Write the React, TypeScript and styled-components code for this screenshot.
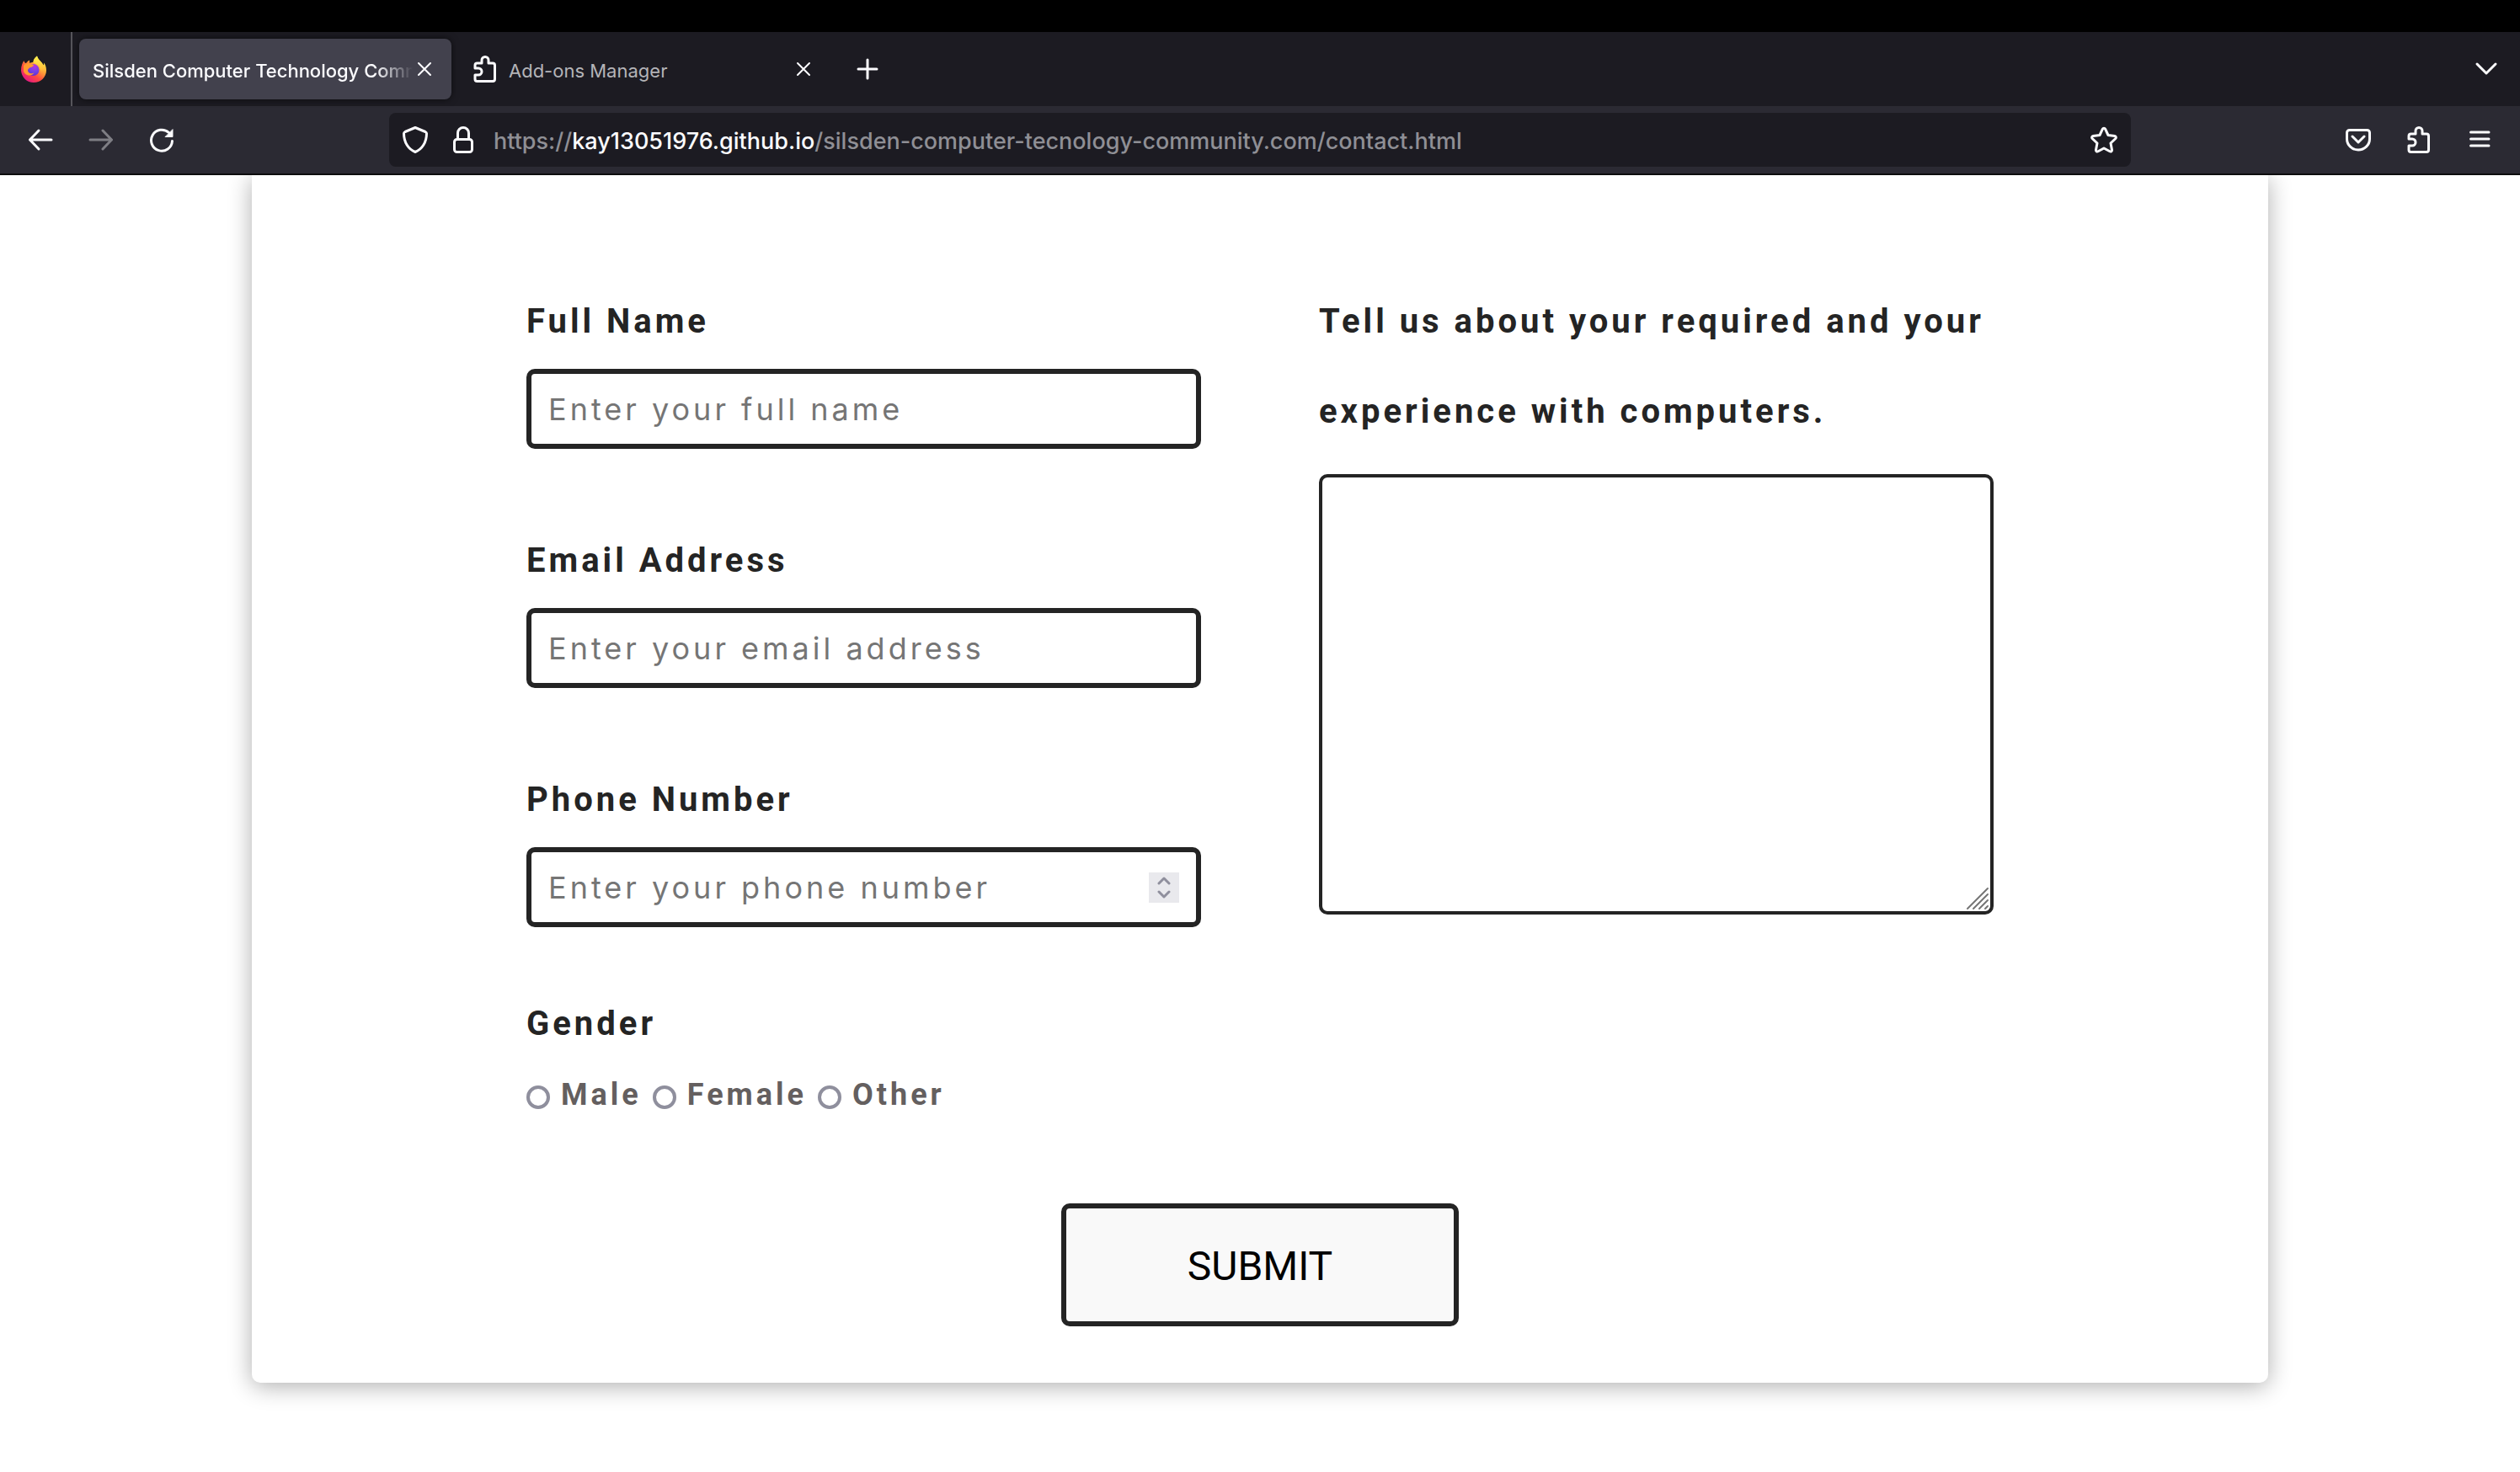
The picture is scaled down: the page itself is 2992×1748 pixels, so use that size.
import React from "react";
import styled, { createGlobalStyle, css } from "styled-components";

const ui = `Inter, "Liberation Sans", sans-serif`;
const body = `Roboto, "Liberation Sans", sans-serif`;
const ink = "#242424";

const GlobalStyle = createGlobalStyle`
  *, *::before, *::after { box-sizing: border-box; }
  body { margin: 0; background: #fff; font-family: ${body}; }
  button, input, textarea { font: inherit; margin: 0; }
`;

const MenuStrip = styled.div`
  height: 38px;
  background: #000;
`;

const TabBar = styled.div`
  display: flex;
  align-items: center;
  gap: 8px;
  height: 88px;
  padding-right: 20px;
  background: #1c1b22;
  color: #fbfbfe;
  font: 500 22px/32px ${ui};
`;

const PinnedButton = styled.button`
  display: grid;
  place-items: center;
  align-self: stretch;
  width: 86px;
  padding: 0 4px 0 0;
  border: 0;
  border-right: 2px solid #56555b;
  background: none;
`;

const Tab = styled.div<{ $active?: boolean }>`
  display: flex;
  align-items: center;
  gap: 4px;
  width: 442px;
  height: 72px;
  padding: 0 22px 0 16px;
  border-radius: 8px;
  ${(p) =>
    p.$active &&
    css`
      background: #42414d;
      box-shadow: 0 0 8px rgba(0, 0, 0, 0.6);
    `}
`;

const TabTitle = styled.button<{ $active?: boolean }>`
  display: flex;
  flex: 1;
  align-items: center;
  gap: 12px;
  min-width: 0;
  overflow: hidden;
  padding: 0;
  border: 0;
  background: none;
  color: ${(p) => (p.$active ? "#fbfbfe" : "#b4b4b8")};
  font-weight: ${(p) => (p.$active ? 500 : 400)};
  white-space: nowrap;
  ${(p) =>
    p.$active &&
    css`
      mask-image: linear-gradient(to left, transparent, #000 44px);
    `}
  svg { flex: none; color: #fbfbfe; }
`;

const TabText = styled.span`
  padding-top: 4px;
`;

const IconButton = styled.button<{ $size?: number; $dim?: boolean }>`
  display: grid;
  flex: none;
  place-items: center;
  width: ${(p) => p.$size ?? 64}px;
  height: ${(p) => p.$size ?? 64}px;
  padding: 0;
  border: 0;
  border-radius: 8px;
  background: none;
  color: #fbfbfe;
  opacity: ${(p) => (p.$dim ? 0.4 : 1)};
`;

const Spacer = styled.div`
  flex: 1;
`;

const Toolbar = styled.div`
  display: grid;
  grid-template-columns: 1fr minmax(0, 2068px) 1fr;
  align-items: center;
  height: 82px;
  border-bottom: 2px solid #0c0c0d;
  background: #2b2a33;
`;

const ToolGroup = styled.div<{ $end?: boolean }>`
  display: flex;
  justify-content: ${(p) => (p.$end ? "flex-end" : "flex-start")};
  gap: 8px;
  padding: 0 16px;
`;

const AddressBar = styled.div`
  display: flex;
  align-items: center;
  height: 64px;
  padding-left: 2px;
  border-radius: 8px;
  background: #1c1b22;
`;

const Address = styled.div`
  flex: 1;
  min-width: 0;
  margin-left: 8px;
  padding-top: 4px;
  overflow: hidden;
  color: #8f8f95;
  font: 500 27px/40px ${ui};
  white-space: nowrap;
`;

const Host = styled.span`
  color: #fbfbfe;
`;

const Page = styled.main`
  overflow: hidden;
  padding-bottom: 104px;
`;

const Card = styled.form`
  width: 80%;
  margin: 0 auto;
  padding: 120px 40px 67px;
  border-radius: 0 0 10px 10px;
  background: #fff;
  box-shadow: 0 4px 28px rgba(0, 0, 0, 0.32);
`;

const Columns = styled.div`
  display: grid;
  grid-template-columns: repeat(2, minmax(0, 801px));
  justify-content: center;
  gap: 140px;
`;

const Field = styled.div<{ $tight?: boolean }>`
  margin-bottom: ${(p) => (p.$tight ? 61 : 79)}px;
`;

const labelText = css`
  display: block;
  color: ${ink};
  font: 700 40px/107px ${body};
  letter-spacing: 4px;
`;

const Label = styled.label<{ $gap?: number }>`
  ${labelText}
  margin-bottom: ${(p) => p.$gap ?? 3}px;
`;

const InputFrame = styled.div`
  position: relative;
`;

const TextInput = styled.input`
  display: block;
  width: 100%;
  height: 95px;
  padding: 0 20px;
  border: 6px solid ${ink};
  border-radius: 10px;
  background: #fff;
  color: ${ink};
  font: 400 36px/44px ${ui};
  letter-spacing: 4px;
  appearance: textfield;
  &::placeholder { color: #757575; opacity: 1; }
  &::-webkit-inner-spin-button { display: none; }
`;

const Stepper = styled.div`
  position: absolute;
  top: 50%;
  right: 26px;
  display: grid;
  width: 36px;
  height: 36px;
  margin-top: -18px;
  background: #e9e9ed;
`;

const StepButton = styled.button`
  display: grid;
  place-items: center;
  height: 18px;
  padding: 0;
  border: 0;
  background: none;
  color: #8f8f9d;
`;

const Message = styled.textarea`
  display: block;
  width: 100%;
  height: 523px;
  padding: 20px;
  border: 4px solid ${ink};
  border-radius: 10px;
  background: #fff;
  font: 400 36px/44px ${ui};
  resize: none;
`;

const Grip = styled.svg`
  position: absolute;
  right: 5px;
  bottom: 5px;
  pointer-events: none;
`;

const Group = styled.fieldset`
  margin: 0;
  padding: 0;
  border: 0;
`;

const Legend = styled.legend`
  ${labelText}
  padding: 0;
`;

const Choices = styled.div`
  display: flex;
  gap: 13px;
  padding-top: 6px;
`;

const Choice = styled.label`
  display: flex;
  align-items: center;
  gap: 13px;
  color: #645f5f;
  font: 700 36px/50px ${body};
  letter-spacing: 4px;
`;

const Radio = styled.input`
  appearance: none;
  width: 28px;
  height: 28px;
  margin-top: 6px;
  border: 4px solid #8f8f9d;
  border-radius: 50%;
  background: #fff;
  &:checked { border-width: 8px; border-color: #0060df; }
`;

const Submit = styled.button`
  display: block;
  width: 472px;
  height: 146px;
  margin: 104px auto 0;
  padding: 4px 0 0;
  border: 6px solid ${ink};
  border-radius: 10px;
  background: #f9f9f9;
  color: #000;
  font: 400 48px/56px ${body};
  text-transform: uppercase;
`;

type IconProps = { size?: number; w?: number; children: React.ReactNode };
const Icon = ({ size = 32, w = 3, children }: IconProps) => (
  <svg width={size} height={size} viewBox={`0 0 ${size} ${size}`} fill="none" stroke="currentColor" strokeWidth={w} strokeLinecap="round" strokeLinejoin="round" aria-hidden="true">
    {children}
  </svg>
);

const CloseIcon = () => (
  <Icon size={20} w={2}><path d="M3 3l14 14M17 3L3 17" /></Icon>
);

const PuzzleIcon = () => (
  <Icon w={3}>
    <path d="M7 30.500h18a2.500 2.500 0 0 0 2.500-2.500V11.500A2.500 2.500 0 0 0 25 9h-5V5.500a4 4 0 0 0-8 0V9H6.500A2.500 2.500 0 0 0 4 11.500V15h4a4 4 0 0 1 0 8H4v5a2.500 2.500 0 0 0 2.500 2.500z" />
  </Icon>
);

const FirefoxLogo = () => (
  <svg width="32" height="32" viewBox="0 0 32 32" aria-hidden="true">
    <defs>
      <linearGradient id="fxBody" x1="0.85" y1="0.1" x2="0.2" y2="0.95">
        <stop offset="0" stopColor="#fff44f" />
        <stop offset="0.35" stopColor="#ffa436" />
        <stop offset="0.65" stopColor="#ff4a3f" />
        <stop offset="1" stopColor="#e31587" />
      </linearGradient>
      <linearGradient id="fxTail" x1="0.5" y1="0" x2="0.5" y2="1">
        <stop offset="0" stopColor="#fff44f" />
        <stop offset="0.6" stopColor="#ffc03a" />
        <stop offset="1" stopColor="#ff7139" stopOpacity="0" />
      </linearGradient>
      <radialGradient id="fxGlobe" cx="0.6" cy="0.2" r="0.9">
        <stop offset="0" stopColor="#b833e1" />
        <stop offset="0.5" stopColor="#7542e5" />
        <stop offset="1" stopColor="#592acb" />
      </radialGradient>
    </defs>
    <path fill="url(#fxBody)" d="M4.500 6C3 8 1 12 1 17.500 1.500 26 8 32 16 32s15-6 15-14.500c0-4-1.500-7.500-3-9 .2 1.500 0 2.500-.4 3C25.500 7 21 5 20 .5c-3 2-4.500 5-4.500 7.500-1.500 0-3 .4-4 1-.5-1-.6-2.500-.3-3.500C9.500 6 8 7.500 7 9c-1.500 0-2.500-1.500-2.500-3z" />
    <circle cx="15.500" cy="17" r="7" fill="url(#fxGlobe)" />
    <path fill="url(#fxTail)" d="M20 .5c1 4.500 5.500 6.500 7.600 11 2 5 .5 11-4.100 14.500 1.500-4 1-10-2-14-2-2.200-4-2.500-6-4 0-2.500 1.500-5.500 4.500-7.500z" />
    <path fill="#ff9a2e" d="M4 12c2-2.500 5-3 7.500-2.500L16 11c0 2-3 3-5 3.500-.5 1-2 1.500-2 3 0 3 4 5 7.500 3-3 5-11 3.500-12.500-2z" />
  </svg>
);

type FieldProps = { id: string; label: string; type: string; placeholder: string; tight?: boolean; children?: React.ReactNode };
const FormField = ({ id, label, type, placeholder, tight, children }: FieldProps) => (
  <Field $tight={tight}>
    <Label htmlFor={id}>{label}</Label>
    <InputFrame>
      <TextInput id={id} type={type} placeholder={placeholder} />
      {children}
    </InputFrame>
  </Field>
);

export default function App() {
  return (
    <>
      <GlobalStyle />
      <header>
        <MenuStrip />
        <TabBar>
          <PinnedButton aria-label="Firefox View"><FirefoxLogo /></PinnedButton>
          <Tab $active>
            <TabTitle $active><TabText>Silsden Computer Technology Comm</TabText></TabTitle>
            <IconButton $size={20} aria-label="Close tab"><CloseIcon /></IconButton>
          </Tab>
          <Tab>
            <TabTitle><PuzzleIcon /><TabText>Add-ons Manager</TabText></TabTitle>
            <IconButton $size={20} aria-label="Close tab"><CloseIcon /></IconButton>
          </Tab>
          <IconButton $size={72} aria-label="New tab">
            <Icon><path d="M16 5v22M5 16h22" /></Icon>
          </IconButton>
          <Spacer />
          <IconButton $size={40} aria-label="List all tabs">
            <Icon><path d="M5 10l11 11 11-11" /></Icon>
          </IconButton>
        </TabBar>
        <Toolbar>
          <ToolGroup>
            <IconButton aria-label="Back">
              <Icon><path d="M29 16H3.500M14 5L3.500 16 14 27" /></Icon>
            </IconButton>
            <IconButton $dim aria-label="Forward">
              <Icon><path d="M3 16h25.500M18 5l10.500 11L18 27" /></Icon>
            </IconButton>
            <IconButton aria-label="Reload">
              <Icon>
                <path d="M28.500 17.500A12.500 12.500 0 1 1 24.500 7.500" />
                <path d="M29 4v8.500h-8.500z" fill="currentColor" strokeWidth="1" />
              </Icon>
            </IconButton>
          </ToolGroup>
          <AddressBar>
            <IconButton $size={58} aria-label="Tracking protection">
              <Icon><path d="M16 1.500L28 6.500c1 .5 1.500 1 1.500 2C29.500 19 24 27.500 16 30.500 8 27.500 2.500 19 2.500 8.500c0-1 .5-1.500 1.500-2z" /></Icon>
            </IconButton>
            <IconButton $size={56} aria-label="Site information">
              <Icon>
                <rect x="5.500" y="15.500" width="21" height="15" rx="3" />
                <path d="M9.500 15V8a6.500 6.500 0 0 1 13 0v7" />
              </Icon>
            </IconButton>
            <Address role="textbox" aria-label="Address">
              https://<Host>kay13051976.github.io</Host>/silsden-computer-tecnology-community.com/contact.html
            </Address>
            <IconButton aria-label="Bookmark this page">
              <Icon><path d="M14.400 3.200a1.800 1.800 0 0 1 3.200 0L21 10.500l7.800 1c1.500.2 2 2 1 3l-5.800 5.500 1.500 8c.2 1.500-1.200 2.500-2.500 1.800L16 26l-7 3.800c-1.300.7-2.700-.3-2.500-1.800l1.500-8-5.800-5.500c-1-1-.5-2.800 1-3l7.800-1z" /></Icon>
            </IconButton>
          </AddressBar>
          <ToolGroup $end>
            <IconButton aria-label="Save to Pocket">
              <Icon>
                <path d="M5.500 4.500h21a3 3 0 0 1 3 3V15a13.500 13 0 0 1-27 0V7.500a3 3 0 0 1 3-3z" />
                <path d="M9 12l7 7 7-7" />
              </Icon>
            </IconButton>
            <IconButton aria-label="Extensions"><PuzzleIcon /></IconButton>
            <IconButton aria-label="Open menu">
              <Icon><path d="M5.500 7h21.500M5.500 15h21.500M5.500 23h21.500" /></Icon>
            </IconButton>
          </ToolGroup>
        </Toolbar>
      </header>

      <Page>
        <Card onSubmit={(e) => e.preventDefault()}>
          <Columns>
            <div>
              <FormField id="name" label="Full Name" type="text" placeholder="Enter your full name" />
              <FormField id="email" label="Email Address" type="email" placeholder="Enter your email address" />
              <FormField id="phone" label="Phone Number" type="number" placeholder="Enter your phone number" tight>
                <Stepper>
                  <StepButton type="button" aria-label="Increase">
                    <Icon size={16}><path d="M2 12l6-6 6 6" /></Icon>
                  </StepButton>
                  <StepButton type="button" aria-label="Decrease">
                    <Icon size={16}><path d="M2 4l6 6 6-6" /></Icon>
                  </StepButton>
                </Stepper>
              </FormField>
              <Group>
                <Legend>Gender</Legend>
                <Choices>
                  {["Male", "Female", "Other"].map((option) => (
                    <Choice key={option}>
                      <Radio type="radio" name="gender" value={option} />
                      {option}
                    </Choice>
                  ))}
                </Choices>
              </Group>
            </div>
            <div>
              <Label htmlFor="message" $gap={21}>
                Tell us about your required and your experience with computers.
              </Label>
              <InputFrame>
                <Message id="message" />
                <Grip width="28" height="28" viewBox="0 0 28 28" stroke="#757575" strokeWidth="2" strokeLinecap="round" aria-hidden="true">
                  <path d="M2 26L26 2M9 26L26 9M16 26L26 16M23 26l3-3" />
                </Grip>
              </InputFrame>
            </div>
          </Columns>
          <Submit type="submit">Submit</Submit>
        </Card>
      </Page>
    </>
  );
}
